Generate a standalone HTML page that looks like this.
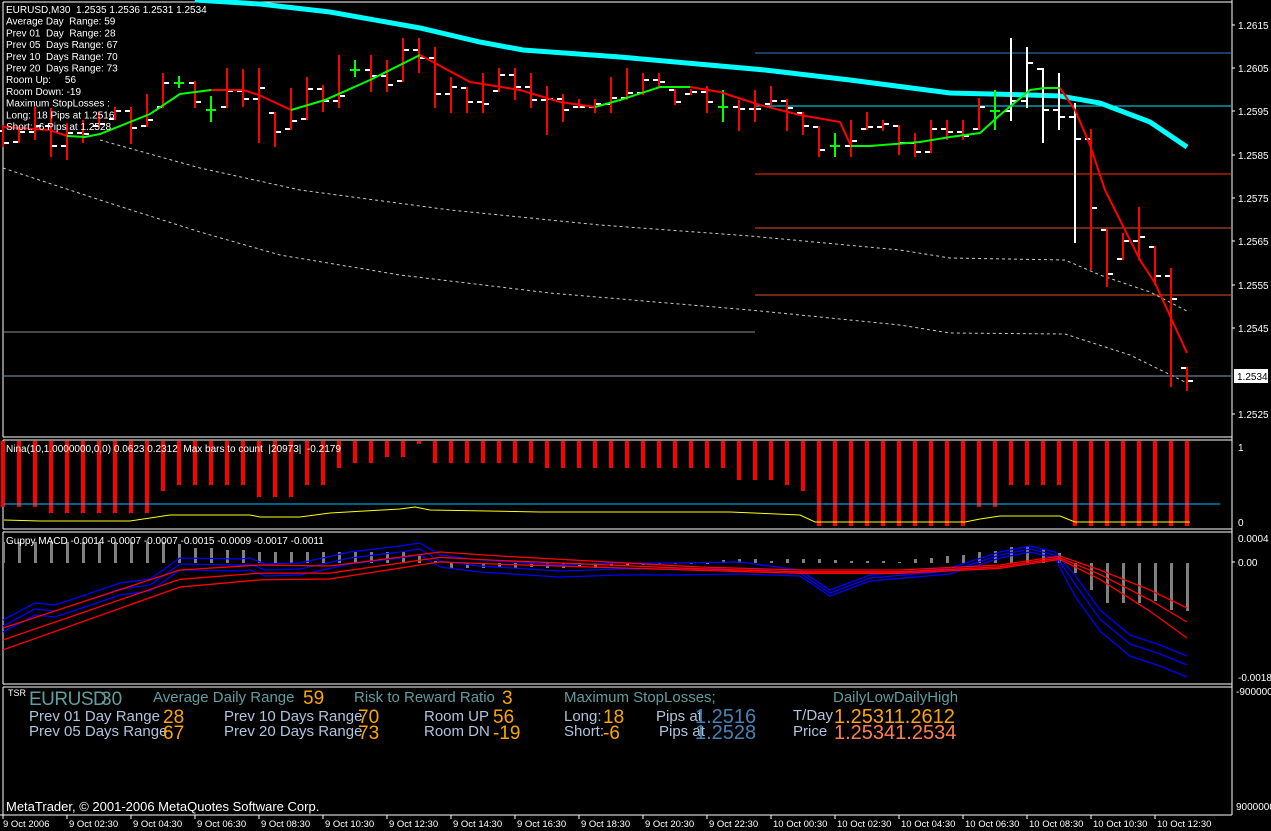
<!DOCTYPE html>
<html><head><meta charset="utf-8"><style>
html,body{margin:0;padding:0;background:#000;overflow:hidden}
body{width:1271px;height:831px;position:relative;font-family:"Liberation Sans",sans-serif}
svg{position:absolute;left:0;top:0}
.t{position:absolute;white-space:pre;line-height:1}
</style></head><body>
<svg id="s" width="1271" height="831" viewBox="0 0 1271 831" font-family="Liberation Sans, sans-serif"></svg>
<div class="t" style="left:8px;top:689px;font-size:9px;color:#fff">TSR</div>
<div class="t" style="left:29px;top:690px;font-size:19px;color:#5f9ea0;letter-spacing:-0.5px">EURUSD</div>
<div class="t" style="left:101px;top:690px;font-size:19px;color:#5f9ea0">30</div>
<div class="t" style="left:153px;top:690px;font-size:15px;color:#5f9ea0">Average Daily Range</div>
<div class="t" style="left:303px;top:689px;font-size:19px;color:#ffa500">59</div>
<div class="t" style="left:354px;top:690px;font-size:15px;color:#5f9ea0">Risk to Reward Ratio</div>
<div class="t" style="left:502px;top:689px;font-size:19px;color:#ffa500">3</div>
<div class="t" style="left:29px;top:709px;font-size:15px;color:#b0c4de">Prev 01 Day Range</div>
<div class="t" style="left:163px;top:708px;font-size:19px;color:#ffa500">28</div>
<div class="t" style="left:29px;top:724px;font-size:15px;color:#b0c4de">Prev 05 Days Range</div>
<div class="t" style="left:163px;top:724px;font-size:19px;color:#ffa500">67</div>
<div class="t" style="left:224px;top:709px;font-size:15px;color:#b0c4de">Prev 10 Days Range</div>
<div class="t" style="left:358px;top:708px;font-size:19px;color:#ffa500">70</div>
<div class="t" style="left:224px;top:724px;font-size:15px;color:#b0c4de">Prev 20 Days Range</div>
<div class="t" style="left:358px;top:724px;font-size:19px;color:#ffa500">73</div>
<div class="t" style="left:424px;top:709px;font-size:15px;color:#b0c4de">Room UP</div>
<div class="t" style="left:493px;top:708px;font-size:19px;color:#ffa500">56</div>
<div class="t" style="left:424px;top:724px;font-size:15px;color:#b0c4de">Room DN</div>
<div class="t" style="left:493px;top:724px;font-size:19px;color:#ffa500">-19</div>
<div class="t" style="left:564px;top:690px;font-size:15px;color:#5f9ea0">Maximum StopLosses;</div>
<div class="t" style="left:564px;top:709px;font-size:15px;color:#b0c4de">Long:</div>
<div class="t" style="left:603px;top:708px;font-size:19px;color:#ffa500">18</div>
<div class="t" style="left:564px;top:724px;font-size:15px;color:#b0c4de">Short:</div>
<div class="t" style="left:603px;top:724px;font-size:19px;color:#ffa500">-6</div>
<div class="t" style="left:656px;top:709px;font-size:15px;color:#b0c4de">Pips at</div>
<div class="t" style="left:659px;top:724px;font-size:15px;color:#b0c4de">Pips at</div>
<div class="t" style="left:695px;top:707px;font-size:20px;color:#4682b4">1.2516</div>
<div class="t" style="left:695px;top:723px;font-size:20px;color:#4682b4">1.2528</div>
<div class="t" style="left:833px;top:690px;font-size:15px;color:#5f9ea0">DailyLowDailyHigh</div>
<div class="t" style="left:793px;top:708px;font-size:15px;color:#b0c4de">T/Day</div>
<div class="t" style="left:793px;top:724px;font-size:15px;color:#b0c4de">Price</div>
<div class="t" style="left:834px;top:707px;font-size:20px;color:#ffa500">1.25311.2612</div>
<div class="t" style="left:834px;top:723px;font-size:20px;color:#ff7f50">1.25341.2534</div>
<div class="t" style="left:6px;top:800px;font-size:13px;color:#fff">MetaTrader, © 2001-2006 MetaQuotes Software Corp.</div>
<script>
var s=document.getElementById('s'),o='';
function L(x1,y1,x2,y2,c,w,d){o+='<line x1="'+x1+'" y1="'+y1+'" x2="'+x2+'" y2="'+y2+'" stroke="'+c+'" stroke-width="'+(w||1)+'"'+(d?' stroke-dasharray="'+d+'"':'')+' shape-rendering="crispEdges"/>';}
function R(x,y,w,h,c){o+='<rect x="'+x+'" y="'+y+'" width="'+w+'" height="'+h+'" fill="'+c+'"/>';}
function P(pts,c,w,d){o+='<polyline fill="none" stroke="'+c+'" stroke-width="'+w+'"'+(d?' stroke-dasharray="'+d+'"':'')+' points="'+pts.map(function(p){return p.join(',')}).join(' ')+'"/>';}
function T(x,y,t,sz,c,a){o+='<text x="'+x+'" y="'+y+'" font-size="'+sz+'" fill="'+(c||'#fff')+'"'+(a?' text-anchor="'+a+'"':'')+'>'+t+'</text>';}
var W='#fff';
L(3,2,1232,2,W);L(3,437,1232,437,W);L(3,2,3,437,W);
L(3,440,1232,440,W);L(3,529,1232,529,W);L(3,440,3,529,W);
L(3,532,1232,532,W);L(3,684,1232,684,W);L(3,532,3,684,W);
L(3,687,1232,687,W);L(3,687,3,815,W);
L(1232,0,1232,815,W);L(0,815,1232,815,W);
L(755,53,1231,53,'#3a78c8');L(755,106,1231,106,'#00e5ff');L(755,174,1231,174,'#ff3000');
L(755,228,1231,228,'#e05020');L(755,295,1231,295,'#e05020');L(4,332,755,332,'#909090');L(4,376,1231,376,'#8898b0');
P([[100,140],[200,168],[300,190],[450,210],[600,225],[750,236],[900,250],[950,258],[1065,260],[1100,275],[1150,292],[1187,311]],'#c8c8c8',1,'3,3');
P([[3,168],[100,200],[200,232],[280,255],[400,275],[550,293],[750,310],[900,325],[950,333],[1065,334],[1130,355],[1187,383]],'#c8c8c8',1,'3,3');
P([[195,0],[260,4],[330,12],[420,28],[480,42],[523,50],[620,57],[765,70],[850,80],[950,93],[1030,95],[1060,96],[1100,103],[1150,122],[1187,147]],'#00ffff',5);
var B=[[125,147],[127,143],[107,140],[108,157],[123,160],[120,143],[112,127],[107,120],[107,144],[94,127],[73,108],[76,88,'g'],[81,108],[96,122,'g'],[68,108],[69,107],[68,143],[112,147],[88,130],[77,120],[85,112],[55,108],[60,77,'g'],[55,92],[60,92],[38,82],[38,73],[47,108],[77,113],[87,113],
[73,113],[68,92],[68,100],[73,108],[86,135],[94,122],[99,108],[99,113],[77,113],[68,100],[73,95],[73,87],[89,105],[89,95],[86,113],[90,122,'g'],[100,131],[90,122],[86,105],[99,131],[112,135],[126,157],[133,157,'g'],[120,157],[112,130],[120,131],[125,155],[133,157],[120,153],[120,140],
[120,140],[98,130],[90,130,'g'],[38,121,'w'],[47,108,'w'],[68,143,'w'],[73,130,'w'],[103,243,'w'],[129,270],[229,287],[233,260],[207,260],[246,285],[268,387],[367,391]];
var prev=130;
B.forEach(function(b,k){var x=3+16*k,c=b[2]=='g'?'#00ff00':b[2]=='w'?'#fff':'#ff0000';
 if(b[2]=='g'){var m=Math.round((b[0]+b[1])/2);R(x-1,b[0],2,b[1]-b[0],c);R(x-5,m,10,2,c);prev=m;return;}
 R(x-1,b[0],2,b[1]-b[0],c);
 var cl=Math.round(b[0]+(b[1]-b[0])*(k%3==0?0.75:k%3==1?0.25:0.55));
 var op=Math.max(b[0],Math.min(b[1]-2,prev));
 R(x-6,op,5,2,'#fff');R(x+1,cl,5,2,'#fff');prev=cl;});
var ma=[[3,127],[50,130],[67,136],[85,137],[100,134],[150,114],[180,94],[211,90],[243,90],[259,95],[291,110],[325,100],[370,80],[420,55],[470,82],[483,84],[520,90],[560,102],[595,107],[620,100],[660,87],[690,87],[720,92],[760,105],[800,115],[840,122],[851,146],[870,146],[920,142],[950,137],[980,133],[1000,115],[1030,90],[1045,88],[1060,88],[1075,110],[1090,145],[1105,190],[1140,260],[1155,283],[1187,353]];
function seg(a,b,c){P(ma.filter(function(p){return p[0]>=a&&p[0]<=b}),c,2);}
seg(0,67,'#ff0000');seg(67,211,'#00ff00');seg(211,291,'#ff0000');seg(291,420,'#00ff00');seg(420,595,'#ff0000');seg(595,690,'#00ff00');seg(690,851,'#ff0000');seg(851,1060,'#00ff00');seg(1060,2000,'#ff0000');
var lv=[['1.2615',25],['1.2605',68],['1.2595',111],['1.2585',155],['1.2575',198],['1.2565',241],['1.2555',285],['1.2545',328],['1.2525',414]];
lv.forEach(function(a){L(1232,a[1],1235,a[1],W);T(1238,a[1]+4,a[0],10);});
R(1234,369,34,14,'#fff');T(1237,380,'1.2534',10,'#000');
var nb=[507,507,507,513,513,513,513,513,513,513,491,485,485,485,485,485,497,497,497,485,485,468,463,463,457,457,444,463,463,463,463,463,463,463,468,468,468,468,468,468,468,468,468,468,468,468,480,480,480,485,491,526,526,526,526,526,526,526,526,526,526,507,507,485,485,485,485,526,526,526,526,526,526,526,526];
nb.forEach(function(b,k){R(3+16*k-2,441,4,b-441,'#ff0000');});
L(4,504,1220,504,'#00bfff');
P([[4,520],[40,521],[130,521],[150,518],[170,515],[250,515],[260,517],[300,517],[330,513],[400,509],[415,507],[430,510],[540,512],[730,512],[800,515],[815,522],[965,522],[980,519],[1000,516],[1060,516],[1075,522],[1190,522]],'#ffff00',1);
T(1238,451,'1',10);T(1238,526,'0',10);
var hb=[[3,542],[19,542],[35,542],[51,542],[67,542],[83,542],[99,542],[115,542],[131,542],[147,542],[163,542],[179,544],[195,548],[211,548],[227,550],[243,550],[259,552],[275,552],[291,552],[307,552],[323,552],[339,552],[355,552],[371,552],[387,552],[403,552],[419,555],[435,561],[451,568],[467,568],[483,568],[499,567],[515,568],[531,567],[547,568],[563,568],[579,567],[595,568],[611,566],[627,566],[643,565],[659,564],[675,564],[691,564],[707,563],[723,560],[739,559],[755,559],[771,561],[787,559],[803,559],[819,559],[835,560],[851,561],[867,561],[883,561],[899,562],[915,559],[931,558],[947,556],[963,555],[979,552],[995,551],[1011,547],[1027,546],[1043,549],[1059,553],[1075,573],[1091,590],[1107,603],[1123,603],[1139,603],[1155,601],[1171,610],[1187,611]];
hb.forEach(function(h){var y1=Math.min(h[1],563),y2=Math.max(h[1],563);if(y2-y1<1)y2=y1+1;R(h[0]-1,y1,3,y2-y1,'#808080');});
var bl=[[3,620],[35,603],[55,605],[85,595],[120,583],[150,579],[180,558],[240,559],[250,558],[265,564],[300,563],[350,552],[400,546],[420,543],[440,555],[480,560],[560,565],[620,563],[680,563],[740,562],[800,570],[830,590],[870,575],[950,568],[1000,552],[1030,546],[1055,552],[1075,575],[1100,610],[1130,635],[1160,645],[1187,656]];
[0,6,12].forEach(function(d,i){P(bl.map(function(p){var e=p[0]>1060?[0,9,21][i]:d*(p[0]<780?1:0.5);return [p[0],p[1]+e];}),'#0000ff',1.3);});
var rl=[[3,628],[180,570],[260,565],[330,566],[440,552],[500,556],[700,567],[800,570],[900,570],[1000,565],[1060,556],[1100,570],[1150,590],[1187,608]];
[0,1,2].forEach(function(i){P(rl.map(function(p){var f=Math.max(0.15,1-p[0]/800);var e=p[0]>1060?[0,14,30][i]*(p[0]-1060)/127:[0,12,22][i]*f;return [p[0],p[1]+e];}),'#ff0000',1.3);});
T(1238,542,'0.0004',10);L(1232,562,1235,562,W);T(1238,566,'0.00',10);T(1238,681,'-0.0018',10);
T(1236,695,'-9000000',10);T(1236,810,'9000000',10);
var info=['EURUSD,M30  1.2535 1.2536 1.2531 1.2534','Average Day  Range: 59','Prev 01  Day  Range: 28','Prev 05  Days Range: 67','Prev 10  Days Range: 70','Prev 20  Days Range: 73','Room Up:     56','Room Down: -19','Maximum StopLosses :','Long:  18 Pips at 1.2516','Short: -6 Pips at 1.2528'];
info.forEach(function(t,i){T(6,13+11.7*i,t.replace(/ /g,'\u00a0'),10);});
T(6,452,'Nina(10,1.0000000,0,0) 0.0623 0.2312  Max bars to count  |20973|  -0.2179'.replace(/ /g,'\u00a0'),10);
T(6,544,'Guppy MACD -0.0014 -0.0007 -0.0007 -0.0015 -0.0009 -0.0017 -0.0011',10);
var tl=['9 Oct 2006','9 Oct 02:30','9 Oct 04:30','9 Oct 06:30','9 Oct 08:30','9 Oct 10:30','9 Oct 12:30','9 Oct 14:30','9 Oct 16:30','9 Oct 18:30','9 Oct 20:30','9 Oct 22:30','10 Oct 00:30','10 Oct 02:30','10 Oct 04:30','10 Oct 06:30','10 Oct 08:30','10 Oct 10:30','10 Oct 12:30'];
tl.forEach(function(t,i){var x=3+64*i;L(x,815,x,819,W);T(x+(i?2:0),827,t,9.5);});
s.innerHTML=o;
</script>
</body></html>
